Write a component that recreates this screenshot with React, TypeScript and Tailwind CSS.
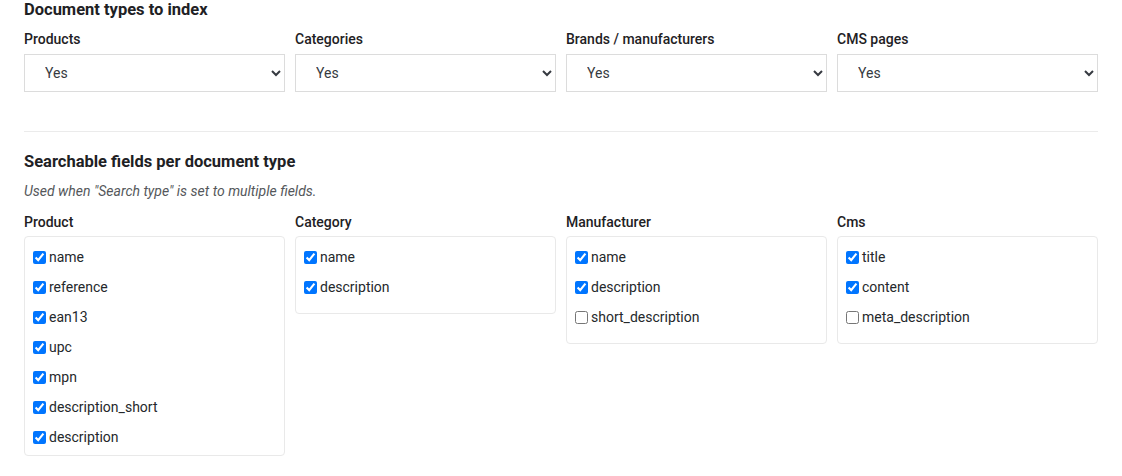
const DOC_TYPES = ['Products', 'Categories', 'Brands / manufacturers', 'CMS pages'];

type Field = { name: string; checked: boolean };

const FIELD_GROUPS: { title: string; fields: Field[]; pad: string }[] = [
  {
    title: 'Product',
    pad: 'pb-[3px]',
    fields: [
      { name: 'name', checked: true },
      { name: 'reference', checked: true },
      { name: 'ean13', checked: true },
      { name: 'upc', checked: true },
      { name: 'mpn', checked: true },
      { name: 'description_short', checked: true },
      { name: 'description', checked: true },
    ],
  },
  {
    title: 'Category',
    pad: 'pb-[11px]',
    fields: [
      { name: 'name', checked: true },
      { name: 'description', checked: true },
    ],
  },
  {
    title: 'Manufacturer',
    pad: 'pb-[11px]',
    fields: [
      { name: 'name', checked: true },
      { name: 'description', checked: true },
      { name: 'short_description', checked: false },
    ],
  },
  {
    title: 'Cms',
    pad: 'pb-[11px]',
    fields: [
      { name: 'title', checked: true },
      { name: 'content', checked: true },
      { name: 'meta_description', checked: false },
    ],
  },
];

const headingFont = "font-['Roboto',sans-serif]";

export default function App() {
  return (
    <div className="min-h-[476px] bg-white px-6 font-['Roboto',sans-serif] text-[#25282b]">
      <h2 className={`${headingFont} pt-px text-[16.5px] leading-[18px] font-bold text-[#1e2124]`}>
        Document types to index
      </h2>

      <div className="mt-[12px] grid grid-cols-4 gap-x-[10px]">
        {DOC_TYPES.map((label) => (
          <label key={label} className="flex flex-col">
            <span className={`${headingFont} text-[14px] leading-[16px] font-medium text-[#1e2124]`}>
              {label}
            </span>
            <select
              defaultValue="yes"
              className="mt-[7px] h-[38px] w-full rounded-none border border-[#dcdcdc] bg-white pl-[16px] pr-[8px] text-[14px] text-[#363a41]"
            >
              <option value="yes">Yes</option>
              <option value="no">No</option>
            </select>
          </label>
        ))}
      </div>

      <hr className="mt-[39px] border-t border-[#ebebeb]" />

      <h2 className={`${headingFont} mt-[21px] text-[16.5px] leading-[18px] font-bold text-[#1e2124]`}>
        Searchable fields per document type
      </h2>
      <p className="mt-[12px] text-[14px] leading-[16px] text-[#55585b] italic">
        Used when "Search type" is set to multiple fields.
      </p>

      <div className="mt-[15px] grid grid-cols-4 items-start gap-x-[10px]">
        {FIELD_GROUPS.map((group) => (
          <div key={group.title} className="flex flex-col">
            <span className={`${headingFont} text-[14px] leading-[16px] font-medium text-[#1e2124]`}>
              {group.title}
            </span>
            <div className={`mt-[6px] rounded-[4px] border border-[#e9e9e9] px-[8px] pt-[5px] ${group.pad}`}>
              {group.fields.map((f) => (
                <label key={f.name} className="flex h-[30px] items-center gap-[3px] text-[14px] text-[#25282b]">
                  <input type="checkbox" defaultChecked={f.checked} className="m-0 h-[13px] w-[13px]" />
                  <span>{f.name}</span>
                </label>
              ))}
            </div>
          </div>
        ))}
      </div>
    </div>
  );
}
